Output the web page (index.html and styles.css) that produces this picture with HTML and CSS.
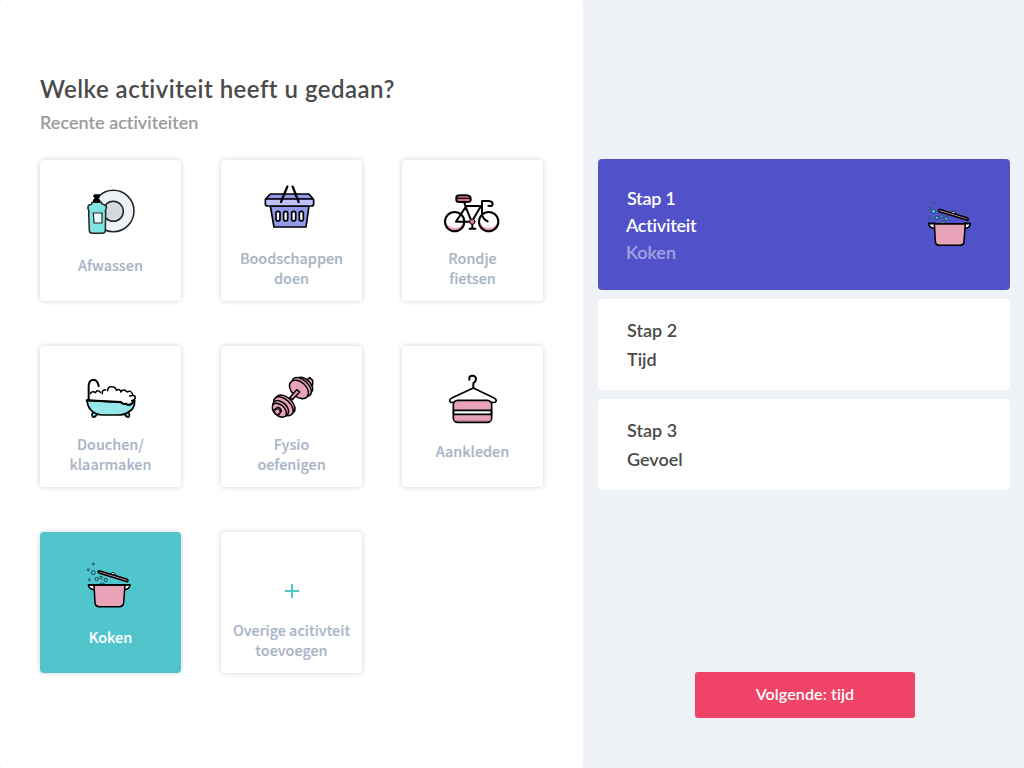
FILE: index.html
```html
<!DOCTYPE html>
<html lang="nl">
<head>
<meta charset="utf-8">
<title>Activiteit kiezen</title>
<link rel="stylesheet" href="styles.css">
</head>
<body>
<svg class="defs" aria-hidden="true">
  <symbol id="pot" viewBox="0 0 225 195">
    <g class="bubbles" stroke="#17344c" stroke-width="2.5">
      <circle cx="56" cy="38" r="3"/><circle cx="41" cy="55" r="3"/><circle cx="56" cy="64" r="6"/>
      <circle cx="44" cy="85" r="3"/><circle cx="66" cy="83" r="5"/><circle cx="79" cy="79" r="4"/>
      <circle cx="93" cy="86" r="5"/><path d="M75 98q6-8 15 0"/>
    </g>
    <g stroke="#000" stroke-width="4.5" stroke-linejoin="round">
      <path d="M108 68q7-11 16 4" fill="#fff" stroke-width="3"/>
      <path d="M73 58L158 84Q162 88 158 91L73 65Q68 61 73 58Z" fill="#e8a3b8"/>
      <path d="M41 100H60V115Q43 115 41 100ZM148 100H166Q165 115 148 115Z" fill="#fff"/>
      <path d="M58 101H151L147 154Q146 166 134 166H74Q62 166 61 154Z" fill="#e8a3b8"/>
      <path d="M40 101H167" fill="none"/>
    </g>
  </symbol>
</svg>
<div class="app">
  <main class="picker">
    <h1 class="title">Welke activiteit heeft u gedaan?</h1>
    <p class="subtitle">Recente activiteiten</p>
    <div class="grid">
      <div class="card">
        <svg class="icon" viewBox="-6 -1 225 195">
          <g stroke="#222" stroke-width="4.5" fill="none">
            <circle cx="115" cy="92" r="62" fill="#edf2f8"/><circle cx="115" cy="93" r="30" fill="#d5d9dc"/>
            <path d="M52 66Q51 72 44 73Q38 76 39 84Q43 91 41 99L43 150Q43 159 52 159H82Q91 159 91 150L92 99Q90 90 94 83Q95 75 88 73Q80 72 79 66Z" fill="#80e6e3"/>
            <path d="M55 98H81V128H57Z" fill="#edf8fc" stroke-width="3.5"/>
          </g>
          <path d="M54 47L58 42H74V54H70L76 60V66H54V58L59 54Z" fill="#000"/>
        </svg>
        <span class="label">Afwassen</span>
      </div>
      <div class="card">
        <svg class="icon" viewBox="-3 14 225 195">
          <g stroke="#000" stroke-width="5" stroke-linejoin="round" stroke-linecap="round">
            <path d="M46 92H162L153 155H57Z" fill="#9399e9"/>
            <path d="M46 56H162L175 72H31Z" fill="#9399e9"/>
            <path d="M35 71H173Q176 71 176 75V86Q176 92 170 92H38Q31 92 31 86V76Q31 71 35 71Z" fill="#bcc1ff"/>
            <g fill="#fff"><rect x="63" y="108" width="12" height="29" rx="6"/><rect x="86" y="108" width="12" height="29" rx="6"/><rect x="110" y="108" width="12" height="29" rx="6"/><rect x="133" y="108" width="12" height="29" rx="6"/></g>
            <path d="M97 34L78 80M113 34L131 80" fill="none" stroke-width="7"/>
          </g>
        </svg>
        <span class="label label-double">Boodschappen<br>doen</span>
      </div>
      <div class="card">
        <svg class="icon" viewBox="0 0 225 195">
          <g stroke="#000" stroke-width="6" fill="none" stroke-linecap="round" stroke-linejoin="round">
            <path d="M34 131Q44 147 61 145Q77 145 84 131Q80 154 59 154Q39 153 34 131ZM136 131Q146 147 163 145Q179 145 186 131Q182 154 161 154Q141 153 136 131Z" fill="#ed8fa4" stroke="#ed8fa4" stroke-width="2"/>
            <circle cx="59" cy="125" r="29"/><circle cx="161" cy="125" r="29"/>
            <path d="M63 125L92 81L110 125L138 78H92M88 68L92 81M63 125H110M158 124Q144 117 141 104V63H162Q173 64 173 72T160 77M112 132V146M104 146H121"/>
            <circle cx="112" cy="125" r="8" fill="#e97790" stroke-width="3"/>
            <path d="M64 52Q64 46 76 46H94Q107 47 107 55V61Q106 66 97 66H73Q64 66 64 60Z" fill="#d87188"/><path d="M66 55H106" stroke-width="4"/>
          </g>
        </svg>
        <span class="label label-double">Rondje<br>fietsen</span>
      </div>
      <div class="card">
        <svg class="icon" viewBox="-6 3 225 195">
          <g stroke="#000" stroke-width="5" fill="none" stroke-linecap="round" stroke-linejoin="round">
            <path d="M59 139Q47 144 53 156Q61 158 68 145M155 139Q167 144 162 156Q154 158 147 145" fill="#80e6e3"/>
            <path d="M36 106L137 112Q145 119 153 117Q161 124 170 117L179 107Q180 131 160 141Q149 150 128 150H84Q59 149 47 134Q38 125 36 106Z" fill="#96e7ea"/>
            <path d="M35 106L138 111M41 101V61Q42 44 57 44Q68 46 71 63" stroke-width="6"/>
            <path d="M46 86Q52 76 61 83Q68 72 76 82M82 86Q80 74 92 74M98 77Q98 64 111 65Q122 65 124 76Q132 70 138 79M137 81Q145 69 157 81Q167 74 173 88M164 93Q180 88 181 97Q180 105 170 107M138 111Q144 119 152 115Q160 122 169 116L178 106" stroke-width="4.5"/>
          </g>
        </svg>
        <span class="label label-double">Douchen/<br>klaarmaken</span>
      </div>
      <div class="card">
        <svg class="icon" viewBox="-3 3 225 195">
          <g stroke="#000" stroke-width="4.5" fill="#e8a3b8" stroke-linejoin="round">
            <path d="M155 45L164 38L173 46V59L164 69"/>
            <g transform="translate(138 68) rotate(43)"><ellipse cx="3" cy="-13" rx="29" ry="17"/><ellipse cx="0" cy="-3" rx="35" ry="20"/><ellipse cx="-1" cy="8" rx="33" ry="22"/></g>
            <path d="M104 98L125 74L134 81L112 104Z"/>
            <g transform="translate(88 121) rotate(43)"><ellipse cx="0" cy="-4" rx="35" ry="21"/><ellipse cx="0" cy="4" rx="35" ry="21"/><ellipse cx="-2" cy="14" rx="28" ry="18"/><ellipse cx="-1" cy="21" rx="25" ry="16"/></g>
            <path d="M59 134L68 127Q77 129 79 138L72 148Q62 150 58 143Z"/><circle cx="67" cy="140" r="8" stroke-width="3"/>
          </g>
        </svg>
        <span class="label label-double">Fysio<br>oefenigen</span>
      </div>
      <div class="card">
        <svg class="icon" viewBox="0 3 225 195">
          <g stroke="#000" stroke-width="5" fill="none" stroke-linecap="round" stroke-linejoin="round">
            <path d="M103 44Q101 32 112 32Q123 32 123 43Q122 50 115 55V69" stroke-width="6"/>
            <path d="M55 112Q44 114 44 106Q44 101 52 98L115 69L176 98Q184 102 184 107Q182 114 171 112"/>
            <rect x="55" y="106" width="115" height="66" rx="13" fill="#e8a3b8"/>
            <path d="M60 166H166" stroke="#bd8292" stroke-width="3"/>
            <path d="M56 136H169V148H56Z" fill="#f0fff8"/>
          </g>
        </svg>
        <span class="label">Aankleden</span>
      </div>
      <div class="card card-active">
        <svg class="icon" viewBox="-5 2 225 195"><use href="#pot" width="225" height="195"/></svg>
        <span class="label">Koken</span>
      </div>
      <div class="card">
        <svg class="icon" viewBox="0 0 75 65"><path d="M31 39H45M38 32V46" stroke="#50c5cb" stroke-width="2"/></svg>
        <span class="label label-double">Overige acitivteit<br>toevoegen</span>
      </div>
    </div>
  </main>
  <aside class="steps">
    <section class="step step-active">
      <div class="step-text"><span class="s1">Stap 1</span><span class="s2">Activiteit</span><span class="s3">Koken</span></div>
      <svg class="step-icon" viewBox="0 0 225 195"><use href="#pot" width="225" height="195"/></svg>
    </section>
    <section class="step"><div class="step-text"><span>Stap 2</span><span>Tijd</span></div></section>
    <section class="step"><div class="step-text"><span>Stap 3</span><span>Gevoel</span></div></section>
    <button class="next">Volgende: tijd</button>
  </aside>
</div>
</body>
</html>
```

FILE: styles.css
```css
* { box-sizing: border-box; }
body { margin: 0; background: #eef1f6; font-family: Lato, sans-serif; font-variant-ligatures: none; }
.defs { display: none; }
.app { display: flex; width: 1024px; height: 768px; overflow: hidden; }
.picker { width: 583px; height: 768px; padding: 72px 0 0 40px; background: #fff; border-radius: 4px; }
.title { margin: 0; height: 34px; font-size: 24px; line-height: 34px; font-weight: 600; letter-spacing: .47px; color: #4a4a4a; white-space: nowrap; }
.subtitle { margin: 4px 0 0; height: 24px; font-size: 18px; line-height: 24px; font-weight: 500; letter-spacing: .05px; color: #9b9b9b; -webkit-text-stroke: .2px currentColor; }
.grid { display: grid; grid-template-columns: repeat(3, 141px); grid-auto-rows: 141px; gap: 45px 40px; margin-top: 26px; }
.card { display: flex; flex-direction: column; align-items: center; padding-top: 20px; border-radius: 4px; background: #fff; box-shadow: 0 0 5px rgba(42, 55, 90, .24); }
.card-active { background: #50c5cb; }
.icon { width: 75px; height: 65px; flex: none; }
.label { margin-top: 10px; font: 500 14.4px/20px "Noto Sans CJK SC", sans-serif; color: #a9b4c6; text-align: center; white-space: nowrap; -webkit-text-stroke: .15px currentColor; }
.label-double { margin-top: 3px; }
.card-active .label { color: #fff; }
.bubbles { fill: var(--bubble, none); }
.steps { display: flex; flex-direction: column; width: 441px; padding: 159px 14px 0 15px; }
.step { display: flex; height: 91px; margin-bottom: 9px; padding: 17px 0 0 29px; border-radius: 4px; background: #fff; font-size: 18px; line-height: 29px; font-weight: 600; color: #4a4a4a; }
.step-text { display: flex; flex-direction: column; align-items: flex-start; }
.step-active { height: 131px; padding: 26px 25px 0 28px; justify-content: space-between; background: #5152c9; color: #fff; line-height: 27px; }
.s1 { margin-left: 1px; letter-spacing: -.3px; }
.s2 { letter-spacing: -.25px; }
.s3 { color: #a4a4e2; font-weight: 500; -webkit-text-stroke: .2px currentColor; }
.step-icon { --bubble: #4ad0d7; width: 75px; height: 65px; margin: 5px -5px 0 0; flex: none; }
.next { align-self: center; position: relative; left: 1px; width: 220px; height: 46px; margin: 173px 0 0; padding: 0 0 2px; border: 0; border-radius: 3px; background: #ef4367; color: #fff; font: 600 16px/44px Lato, sans-serif; letter-spacing: .12px; font-variant-ligatures: none; }
```
